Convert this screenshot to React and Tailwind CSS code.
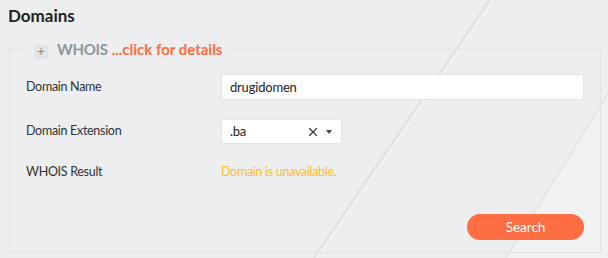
import React, { useState } from 'react';
import { X } from 'lucide-react';

export default function App() {
    const [domain, setDomain] = useState('drugidomen');
    const [ext, setExt] = useState('.ba');

    return (
        <div className="relative w-[608px] h-[258px] overflow-hidden bg-[#eceeef] font-['Lato',sans-serif] text-[#333]">
            {/* decorative background */}
            <svg className="absolute inset-0 pointer-events-none" width="608" height="258" viewBox="0 0 608 258">
                <polygon points="666,0 608,0 608,258 506,258" fill="#f1f2f3" />
                <line x1="490" y1="0" x2="314" y2="258" stroke="#e1e3e4" strokeWidth="3" />
                <line x1="493" y1="0" x2="317" y2="258" stroke="#f4f5f6" strokeWidth="1.5" />
                <line x1="666" y1="0" x2="506" y2="258" stroke="#e3e5e6" strokeWidth="2" />
            </svg>

            <div className="relative">
                <h1 className="px-2 pt-[5px] text-[17px] leading-[22px] font-bold text-[#222]">Domains</h1>

                <fieldset className="mt-[12px] ml-[9px] w-[592px] border border-[#dfe2e4] pl-4 pr-4 pb-[12px]">
                    <legend className="ml-[-4px] pl-3 pr-[11px] flex items-center h-[20px]">
                        <span className="w-[14px] h-[14px] mt-[5px] bg-[#e2e5e7] flex items-center justify-center text-[#7d878b] text-[13px] leading-none">+</span>
                        <span className="ml-[9px] text-[15px] font-bold text-[#8c979b] tracking-[-0.3px]">WHOIS</span>
                        <span className="ml-[4px] text-[15px] font-bold text-[#ff6d42] cursor-pointer">...click for details</span>
                    </legend>

                    <div className="pt-[15px] grid grid-cols-[195px_1fr] items-center text-[12.5px] tracking-[-0.3px]">
                        <label className="text-[#333]">Domain Name</label>
                        <input
                            className="h-[26px] w-full rounded-[3px] border border-[#e4e6e8] bg-white px-2 text-[13px] text-[#222] outline-none tracking-[-0.2px]"
                            value={domain}
                            onChange={(e) => setDomain(e.target.value)}
                        />

                        <label className="mt-[19px] text-[#333]">Domain Extension</label>
                        <div className="mt-[19px] h-[25px] w-[121px] rounded-[3px] border border-[#e4e6e8] bg-white pl-2 pr-[9px] flex items-center text-[13px]">
                            <span className="flex-1 text-[#222]">{ext}</span>
                            <button className="text-[#333]" onClick={() => setExt('')}>
                                <X size={14} strokeWidth={2} />
                            </button>
                            <span className="ml-[6px] w-0 h-0 border-l-[3px] border-r-[3px] border-t-[4px] border-l-transparent border-r-transparent border-t-[#444]" />
                        </div>

                        <span className="mt-[18px] h-[20px] flex items-center text-[#333]">WHOIS Result</span>
                        <span className="mt-[18px] h-[20px] flex items-center text-[#fbc02d]">Domain is unavailable.</span>
                    </div>

                    <div className="mt-[32px] flex justify-end">
                        <button className="h-[26px] w-[117px] rounded-full bg-[#ff6d42] text-white text-[13.5px]">
                            Search
                        </button>
                    </div>
                </fieldset>
            </div>
        </div>
    );
}
